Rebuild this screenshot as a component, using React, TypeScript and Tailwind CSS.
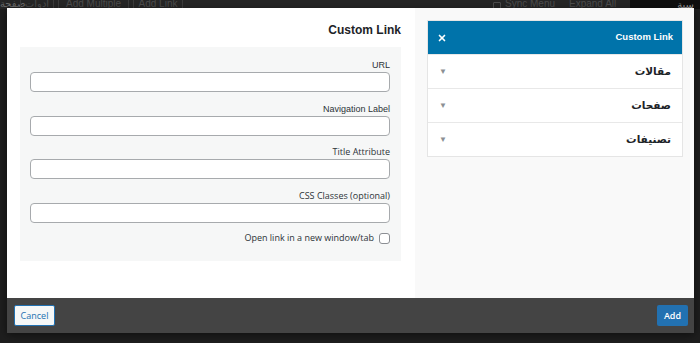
import { X } from "lucide-react";

const sans = { fontFamily: '"Liberation Sans", "DejaVu Sans", sans-serif' };

function Field({ label, open }: { label: string; open?: boolean }) {
  return (
    <div className="flex flex-col items-end">
      <label
        className={`text-[9px] leading-[14px] text-[#2c3338] ${open ? "font-['Open_Sans']" : "font-['Liberation_Sans']"}`}
      >
        {label}
      </label>
      <input
        type="text"
        className="h-[20px] w-full rounded-[4px] border border-[#a7aaad] bg-white outline-none"
      />
    </div>
  );
}

function MenuItem({ label }: { label: string }) {
  return (
    <div className="flex h-[34px] items-center justify-between border-t border-[#e8e8e8] bg-white px-[11px]">
      <span className="text-[#8c8f94] text-[8px] leading-none">▼</span>
      <span
        dir="rtl"
        className="text-[10.5px] font-bold text-[#1d2327]"
        style={{ fontFamily: '"DejaVu Sans", "Noto Sans", sans-serif' }}
      >
        {label}
      </span>
    </div>
  );
}

function Sep() {
  return <span className="h-full w-[1px] shrink-0 bg-[#3c3c3c]" />;
}

export default function App() {
  return (
    <div className="relative h-[343px] w-[700px] overflow-hidden bg-[#1e1e1e]" style={sans}>
      {/* page behind the dialog */}
      <div className="flex h-[9px] items-end overflow-hidden bg-[#262626] text-[10px] leading-[10px] text-[#4d4d4d]">
        <span className="w-[20px] shrink-0 text-center text-[#6a6a6a]">صفحة</span>
        <Sep />
        <span className="w-[32px] shrink-0 text-center">أدوات</span>
        <Sep />
        <span className="w-[4px] shrink-0" />
        <Sep />
        <span className="w-[69px] shrink-0 text-center">Add Multiple</span>
        <Sep />
        <span className="w-[4px] shrink-0" />
        <Sep />
        <span className="w-[48px] shrink-0 text-center">Add Link</span>
        <Sep />
        <span className="ml-[310px] mr-[4px] h-[7px] w-[8px] shrink-0 rounded-[1px] border border-[#4d4d4d]" />
        <span className="w-[52px] shrink-0">Sync Menu</span>
        <span className="ml-[12px] w-[56px] shrink-0">Expand All</span>
        <span className="ml-auto h-full w-[70px] shrink-0 bg-[#0f0f0f] pr-[6px] text-right text-[#9a9a9a]">سية</span>
      </div>

      {/* dialog */}
      <div className="absolute left-[7px] top-[8px] flex h-[325px] w-[687px] flex-col shadow-[0_2px_8px_rgba(0,0,0,0.5)]">
        <div className="flex h-[290px]">
          {/* left: form */}
          <div className="w-[408px] bg-white pl-[13px] pr-[14px]">
            <h2 className="h-[39px] pt-[14px] text-right text-[12px] font-bold leading-[16px] text-[#1d2327]">
              Custom Link
            </h2>
            <div className="flex h-[214px] flex-col gap-[1px] bg-[#f6f7f7] pl-[10px] pr-[11px] pt-[11px]">
              <Field label="URL" />
              <div className="h-[7.5px]" />
              <Field label="Navigation Label" />
              <div className="h-[7.5px]" />
              <Field label="Title Attribute" open />
              <div className="h-[7.5px]" />
              <Field label="CSS Classes (optional)" open />
              <div className="mt-[8px] flex h-[13px] items-center justify-end gap-[5px]">
                <span className="font-['Open_Sans'] text-[9px] text-[#2c3338]">Open link in a new window/tab</span>
                <span className="h-[11px] w-[11px] rounded-[3px] border border-[#8c8f94] bg-white" />
              </div>
            </div>
          </div>

          {/* right: sidebar */}
          <div className="flex-1 bg-[#f9f9f9] pl-[12px] pr-[11px] pt-[12px]">
            <div className="border border-[#e5e5e5]">
              <div className="flex h-[33px] items-center justify-between bg-[#0073aa] px-[9px] text-white">
                <X size={10} strokeWidth={4} />
                <span className="text-[9.5px] font-bold">Custom Link</span>
              </div>
              <MenuItem label="مقالات" />
              <MenuItem label="صفحات" />
              <MenuItem label="تصنيفات" />
            </div>
          </div>
        </div>

        {/* footer */}
        <div className="flex h-[35px] items-center justify-between bg-[#444444] pl-[7px] pr-[6px]">
          <button className="h-[21px] w-[41px] rounded-[2px] border border-[#2271b1] bg-[#f6f7f7] font-['Open_Sans'] text-[9px] text-[#2271b1]">
            Cancel
          </button>
          <button className="h-[21px] w-[31px] rounded-[2px] bg-[#2271b1] font-['Open_Sans'] text-[9px] font-semibold text-white">
            Add
          </button>
        </div>
      </div>
    </div>
  );
}
